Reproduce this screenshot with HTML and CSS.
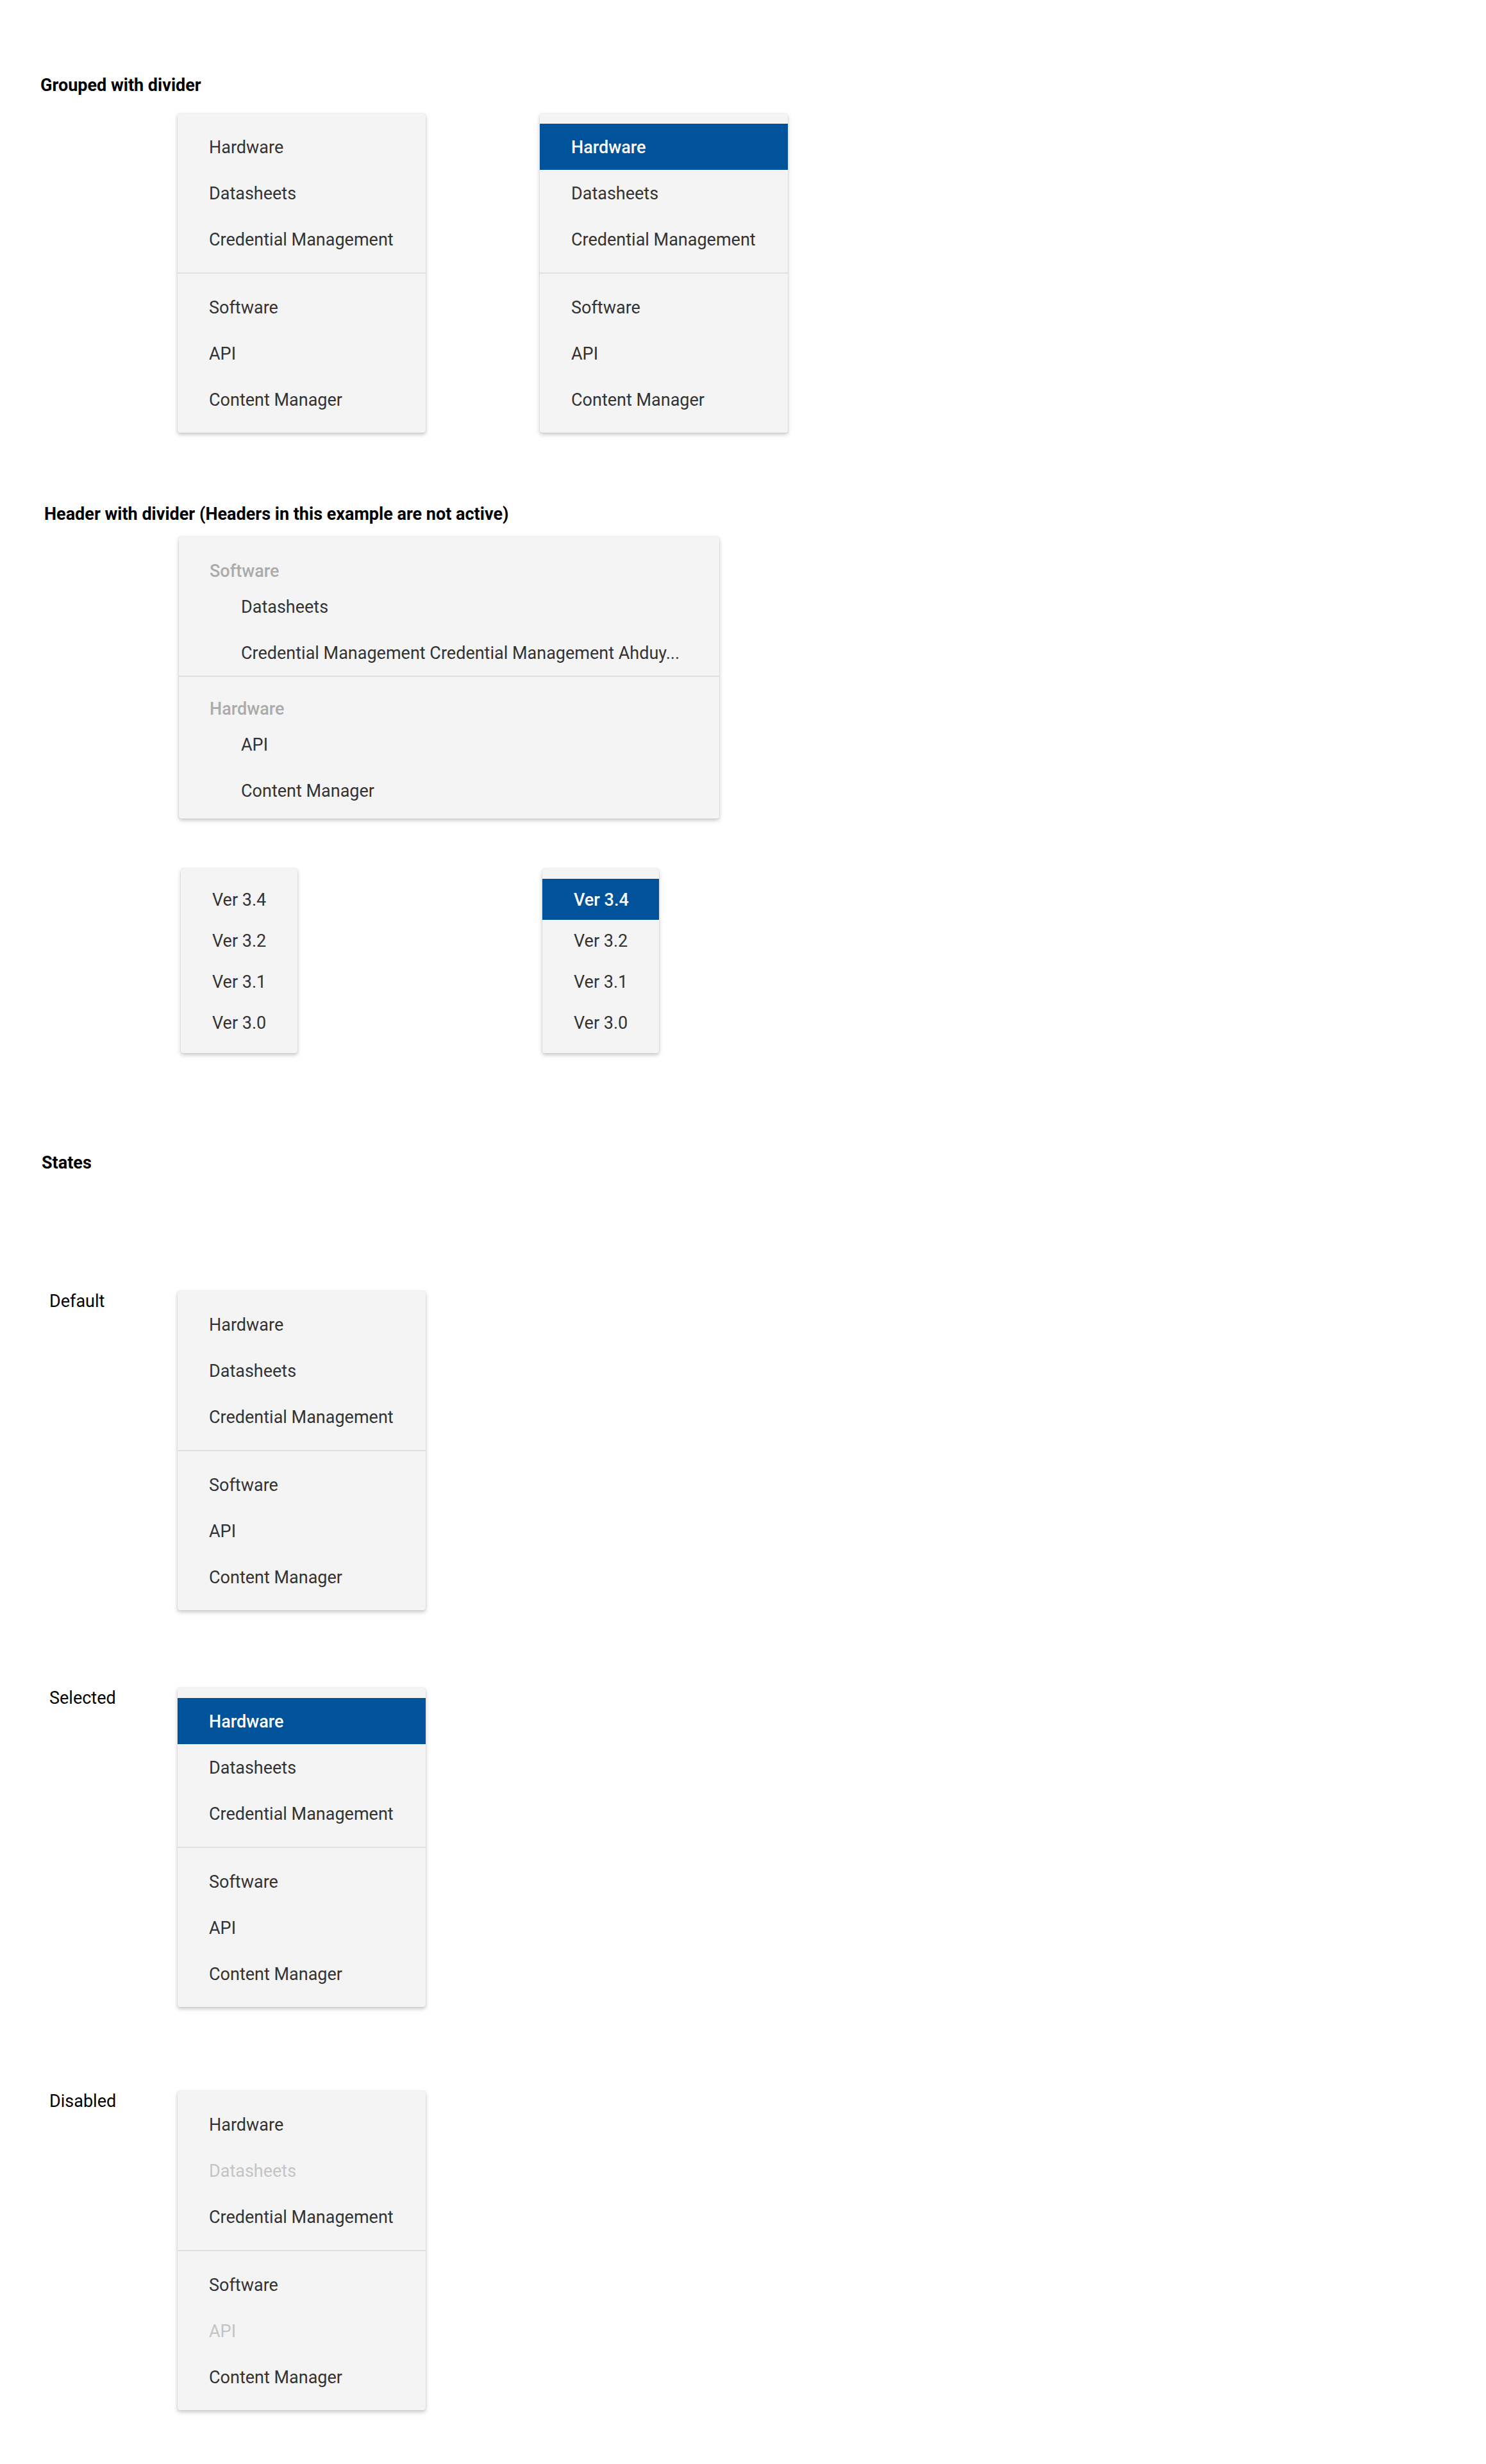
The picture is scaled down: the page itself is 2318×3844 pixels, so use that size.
FILE: index.html
```html
<!DOCTYPE html>
<html lang="en">
<head>
<meta charset="utf-8">
<title>Menu</title>
<link rel="stylesheet" href="styles.css">
</head>
<body>
<main class="page">
  <section class="section">
    <h2 class="title title-grouped">Grouped with divider</h2>
    <div class="menu-row row-grouped">
      <div class="menu menu-std">
        <div class="group">
          <div class="item">Hardware</div>
          <div class="item">Datasheets</div>
          <div class="item">Credential Management</div>
        </div>
        <div class="divider"></div>
        <div class="group">
          <div class="item">Software</div>
          <div class="item">API</div>
          <div class="item">Content Manager</div>
        </div>
      </div>
      <div class="menu menu-std">
        <div class="group">
          <div class="item selected">Hardware</div>
          <div class="item">Datasheets</div>
          <div class="item">Credential Management</div>
        </div>
        <div class="divider"></div>
        <div class="group">
          <div class="item">Software</div>
          <div class="item">API</div>
          <div class="item">Content Manager</div>
        </div>
      </div>
    </div>
  </section>

  <section class="section">
    <h2 class="title title-header">Header with divider (Headers in this example are not active)</h2>
    <div class="menu menu-wide">
      <div class="group">
        <div class="menu-head">Software</div>
        <div class="item sub">Datasheets</div>
        <div class="item sub">Credential Management Credential Management Ahduy...</div>
      </div>
      <div class="divider divider-flush"></div>
      <div class="group">
        <div class="menu-head head-second">Hardware</div>
        <div class="item sub">API</div>
        <div class="item sub">Content Manager</div>
      </div>
    </div>

    <div class="menu-row row-ver">
      <div class="menu menu-ver">
        <div class="item item-ver">Ver 3.4</div>
        <div class="item item-ver">Ver 3.2</div>
        <div class="item item-ver">Ver 3.1</div>
        <div class="item item-ver">Ver 3.0</div>
      </div>
      <div class="menu menu-ver">
        <div class="item item-ver selected">Ver 3.4</div>
        <div class="item item-ver">Ver 3.2</div>
        <div class="item item-ver">Ver 3.1</div>
        <div class="item item-ver">Ver 3.0</div>
      </div>
    </div>
  </section>

  <section class="section">
    <h2 class="title title-states">States</h2>

    <div class="state state-default">
      <div class="state-label">Default</div>
      <div class="menu menu-std">
        <div class="group">
          <div class="item">Hardware</div>
          <div class="item">Datasheets</div>
          <div class="item">Credential Management</div>
        </div>
        <div class="divider"></div>
        <div class="group">
          <div class="item">Software</div>
          <div class="item">API</div>
          <div class="item">Content Manager</div>
        </div>
      </div>
    </div>

    <div class="state state-selected">
      <div class="state-label">Selected</div>
      <div class="menu menu-std">
        <div class="group">
          <div class="item selected">Hardware</div>
          <div class="item">Datasheets</div>
          <div class="item">Credential Management</div>
        </div>
        <div class="divider"></div>
        <div class="group">
          <div class="item">Software</div>
          <div class="item">API</div>
          <div class="item">Content Manager</div>
        </div>
      </div>
    </div>

    <div class="state state-disabled">
      <div class="state-label">Disabled</div>
      <div class="menu menu-std">
        <div class="group">
          <div class="item">Hardware</div>
          <div class="item disabled">Datasheets</div>
          <div class="item">Credential Management</div>
        </div>
        <div class="divider"></div>
        <div class="group">
          <div class="item">Software</div>
          <div class="item disabled">API</div>
          <div class="item">Content Manager</div>
        </div>
      </div>
    </div>
  </section>
</main>
</body>
</html>
```

FILE: styles.css
```css
* {
  box-sizing: border-box;
}

html, body {
  margin: 0;
  padding: 0;
  background: #ffffff;
}

body {
  font-family: Roboto, "Liberation Sans", sans-serif;
  color: #000000;
}

.page {
  padding-top: 117px;
  padding-bottom: 83px;
}

.title {
  margin: 0;
  font-size: 27px;
  line-height: 33px;
  font-weight: 700;
  color: #000000;
}

.title-grouped {
  margin-left: 63px;
}

.title-header {
  margin-left: 69px;
  margin-top: 111px;
}

.title-states {
  margin-left: 65px;
  margin-top: 155px;
}

.menu-row {
  display: flex;
  align-items: flex-start;
}

.row-grouped {
  margin-top: 27px;
  padding-left: 277px;
  gap: 178px;
}

.row-ver {
  margin-top: 78px;
  padding-left: 282px;
  gap: 382px;
}

.menu {
  background: #f4f4f4;
  border-radius: 4px;
  box-shadow: 0 3px 6px rgba(0, 0, 0, 0.22), 0 0 2px rgba(0, 0, 0, 0.12);
  padding: 16px 0;
  font-size: 27px;
  color: #333333;
}

.menu-std {
  width: 387px;
  flex: none;
}

.item {
  height: 72px;
  display: flex;
  align-items: center;
  padding-left: 49px;
  padding-top: 2px;
  white-space: nowrap;
}

.item.selected {
  background: #00539b;
  color: #ffffff;
  font-weight: 500;
}

.item.disabled {
  color: #c4c4c4;
}

.divider {
  height: 2px;
  background: #e0e0e0;
  margin: 16px 0;
}

.divider-flush {
  margin: 0;
}

/* header menu */
.menu-wide {
  width: 843px;
  margin-top: 18px;
  margin-left: 279px;
  padding: 38px 0 8px;
}

.menu-head {
  padding-left: 48px;
  line-height: 32px;
  height: 32px;
  margin-bottom: 3px;
  color: #ababab;
  font-weight: 500;
}

.head-second {
  margin-top: 34px;
}

.item.sub {
  padding-left: 97px;
  padding-right: 40px;
}

/* version menus */
.menu-ver {
  width: 182px;
  flex: none;
}

.item-ver {
  height: 64px;
  padding-left: 49px;
}

/* states */
.state {
  display: flex;
  align-items: flex-start;
  padding-left: 77px;
}

.state-default {
  margin-top: 183px;
}

.state-selected {
  margin-top: 121px;
}

.state-disabled {
  margin-top: 131px;
}

.state-label {
  width: 200px;
  flex: none;
  font-size: 27px;
  line-height: 32px;
  color: #000000;
}
```
